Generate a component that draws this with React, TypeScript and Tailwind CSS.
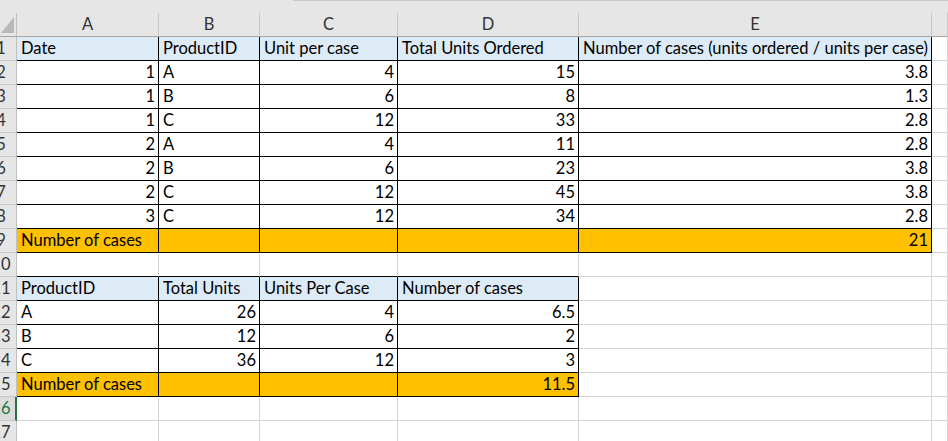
import React from "react";

type Row = { cells: string[]; fill?: "blue" | "orange"; span: number };

// span = how many columns (from A) belong to the bordered table on that row
const rows: Row[] = [
  { cells: ["Date", "ProductID", "Unit per case", "Total Units Ordered", "Number of cases (units ordered / units per case)"], fill: "blue", span: 5 },
  { cells: ["1", "A", "4", "15", "3.8"], span: 5 },
  { cells: ["1", "B", "6", "8", "1.3"], span: 5 },
  { cells: ["1", "C", "12", "33", "2.8"], span: 5 },
  { cells: ["2", "A", "4", "11", "2.8"], span: 5 },
  { cells: ["2", "B", "6", "23", "3.8"], span: 5 },
  { cells: ["2", "C", "12", "45", "3.8"], span: 5 },
  { cells: ["3", "C", "12", "34", "2.8"], span: 5 },
  { cells: ["Number of cases", "", "", "", "21"], fill: "orange", span: 5 },
  { cells: [], span: 0 },
  { cells: ["ProductID", "Total Units", "Units Per Case", "Number of cases"], fill: "blue", span: 4 },
  { cells: ["A", "26", "4", "6.5"], span: 4 },
  { cells: ["B", "12", "6", "2"], span: 4 },
  { cells: ["C", "36", "12", "3"], span: 4 },
  { cells: ["Number of cases", "", "", "11.5"], fill: "orange", span: 4 },
  { cells: [], span: 0 },
  { cells: [], span: 0 },
];

const letters = ["A", "B", "C", "D", "E", ""];
const gridCols = "grid grid-cols-[17px_142px_101px_138px_181px_353px_1fr]";

const inTable = (r: number, c: number) => r >= 0 && r < rows.length && c < rows[r].span;
const isNum = (v: string) => /^[0-9.]+$/.test(v);

function Cell({ r, c }: { r: number; c: number }) {
  const row = rows[r];
  const v = row.cells[c] ?? "";
  const inside = inTable(r, c);
  const rightBlack = inside || inTable(r, c + 1);
  const bottomBlack = inside || inTable(r + 1, c);
  const bg = inside && row.fill === "blue" ? "bg-[#ddebf7]" : inside && row.fill === "orange" ? "bg-[#ffc000]" : "bg-white";

  return (
    <div
      className={`h-6 box-border border-r border-b overflow-hidden whitespace-nowrap leading-[23px] ${bg} ${
        rightBlack ? "border-r-black" : "border-r-[#d4d4d4]"
      } ${bottomBlack ? "border-b-black" : "border-b-[#d4d4d4]"} ${isNum(v) ? "text-right pr-[3px]" : "text-left pl-[4px]"}`}
    >
      {v}
    </div>
  );
}

export default function App() {
  return (
    <div className="w-[948px] h-[441px] overflow-hidden bg-white text-black text-[16.5px] font-['Lato',sans-serif]">
      {/* strip above the column letters */}
      <div className="h-[13px] bg-[#e6e6e6] flex">
        <div className="w-[293px]" />
        <div className="flex-1 border-t border-[#c6c6c6]" />
      </div>

      {/* column letters */}
      <div className={`${gridCols} bg-[#e6e6e6] text-[#333]`}>
        <div className="h-6 box-border border-r border-b border-r-[#bfbfbf] border-b-[#a6a6a6] flex items-end justify-end pr-[2px] pb-[3px]">
          <svg width="13" height="16" viewBox="0 0 13 16">
            <polygon points="13,0 13,16 0,16" fill="#b9b9b9" />
          </svg>
        </div>
        {letters.map((l, i) => (
          <div
            key={i}
            className="h-6 box-border border-r border-b border-r-[#c6c6c6] border-b-[#a6a6a6] text-center leading-[23px]"
          >
            {l}
          </div>
        ))}
      </div>

      {/* body */}
      <div className={gridCols}>
        {rows.map((row, r) => (
          <React.Fragment key={r}>
            <div
              className={`h-6 box-border border-b border-b-[#c6c6c6] overflow-hidden flex leading-[23px] ${
                r === 15
                  ? "bg-[#dcdcdc] text-[#217346] border-r-2 border-r-[#217346]"
                  : "bg-[#e6e6e6] text-[#333] border-r border-r-[#bfbfbf]"
              }`}
            >
              <div className="w-[30px] shrink-0 -ml-[14px] text-center">{r + 1}</div>
            </div>
            {[0, 1, 2, 3, 4, 5].map((c) => (
              <Cell key={c} r={r} c={c} />
            ))}
          </React.Fragment>
        ))}
      </div>
    </div>
  );
}
